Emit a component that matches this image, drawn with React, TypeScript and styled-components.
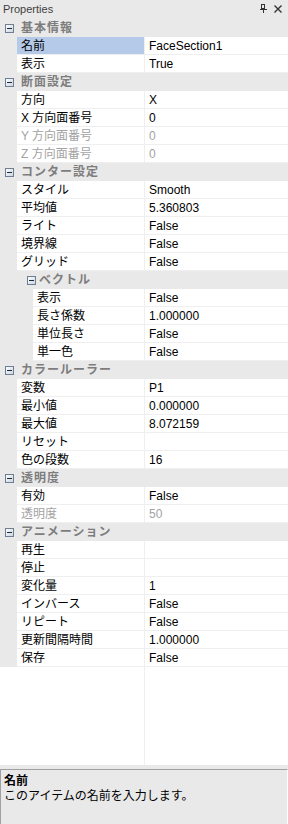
import React from "react";
import styled, { createGlobalStyle } from "styled-components";

const GlobalStyle = createGlobalStyle`
  html, body {
    margin: 0;
    padding: 0;
    background: #e9e9e9;
  }
  body {
    font-family: "Liberation Sans", "Noto Sans CJK JP", sans-serif;
    font-size: 12px;
    color: #000;
  }
`;

const SPLIT = 144;
const GRAY = "#e9e9e9";
const LINE = "#efefef";

const Panel = styled.div`
  width: 288px;
  height: 824px;
  display: flex;
  flex-direction: column;
  background: ${GRAY};
  overflow: hidden;
`;

const TitleBar = styled.div`
  height: 19px;
  display: flex;
  align-items: center;
  padding: 0 6px 0 3px;
  box-sizing: border-box;
  color: #3f3f3f;
  font-size: 11px;
`;

const Title = styled.span`
  flex: 1;
  padding-bottom: 2px;
`;

const TitleButtons = styled.div`
  display: flex;
  gap: 7px;
  align-items: center;
  padding-bottom: 2px;
`;

const Grid = styled.div`
  flex: 1;
  display: flex;
  flex-direction: column;
  background: linear-gradient(
    to right,
    #fff ${SPLIT}px,
    ${LINE} ${SPLIT}px,
    ${LINE} ${SPLIT + 1}px,
    #fff ${SPLIT + 1}px
  );
`;

const CategoryRow = styled.div<{ $indent: number }>`
  height: 18px;
  display: flex;
  align-items: center;
  background: ${GRAY};
  padding-left: ${p => p.$indent}px;
  box-sizing: border-box;
`;

const CategoryLabel = styled.span<{ $gap: number }>`
  margin-left: ${p => p.$gap}px;
  font-weight: bold;
  color: #7d7d7d;
  letter-spacing: 1px;
  line-height: 18px;
`;

const Row = styled.div<{ $gutter: number }>`
  height: 18px;
  display: grid;
  grid-template-columns: ${p => p.$gutter}px ${p => SPLIT + 1 - p.$gutter}px 1fr;
`;

const Gutter = styled.div`
  background: ${GRAY};
`;

const NameCell = styled.div<{ $selected?: boolean; $disabled?: boolean }>`
  background: ${p => (p.$selected ? "#b5c9e8" : "#fff")};
  color: ${p => (p.$disabled ? "#a3a3a3" : "#000")};
  border-right: 1px solid ${LINE};
  border-bottom: 1px solid ${LINE};
  padding: 1px 0 0 4px;
  line-height: 16px;
  white-space: nowrap;
  overflow: hidden;
`;

const ValueCell = styled.div<{ $disabled?: boolean }>`
  background: #fff;
  color: ${p => (p.$disabled ? "#a3a3a3" : "#000")};
  border-bottom: 1px solid ${LINE};
  padding: 1px 0 0 4px;
  line-height: 16px;
  white-space: nowrap;
`;

const Splitter = styled.div`
  height: 4px;
  background: ${GRAY};
`;

const Description = styled.div`
  height: 55px;
  box-sizing: border-box;
  background: ${GRAY};
  border-top: 1px solid #a0a0a0;
  border-left: 1px solid #a0a0a0;
  border-right: 1px solid #fff;
  padding: 4px 3px;
`;

const DescTitle = styled.div`
  font-weight: bold;
  line-height: 15px;
`;

const DescText = styled.div`
  line-height: 15px;
`;

const MinusBox = () => (
  <svg width="9" height="9" viewBox="0 0 9 9">
    <defs>
      <linearGradient id="mb" x1="0" y1="0" x2="1" y2="1">
        <stop offset="0" stopColor="#ffffff" />
        <stop offset="1" stopColor="#c9d3df" />
      </linearGradient>
    </defs>
    <rect x="0.5" y="0.5" width="8" height="8" fill="url(#mb)" stroke="#6f7f93" />
    <rect x="2" y="4" width="5" height="1" fill="#1d2a3a" />
  </svg>
);

const PinIcon = () => (
  <svg width="7" height="9" viewBox="0 0 7 9" shapeRendering="crispEdges">
    <rect x="1.5" y="0.5" width="3" height="4" fill="none" stroke="#333" />
    <rect x="4" y="1" width="1" height="4" fill="#333" />
    <rect x="0" y="5" width="7" height="1" fill="#333" />
    <rect x="3" y="6" width="1" height="3" fill="#333" />
  </svg>
);

const CloseIcon = () => (
  <svg width="8" height="8" viewBox="0 0 8 8">
    <path d="M0.5 0.5 L7.5 7.5 M7.5 0.5 L0.5 7.5" stroke="#333" strokeWidth="1.4" />
  </svg>
);

type Prop = { name: string; value: string; selected?: boolean; disabled?: boolean };
type Section = { title: string; nested?: boolean; props: Prop[] };

const sections: Section[] = [
  {
    title: "基本情報",
    props: [
      { name: "名前", value: "FaceSection1", selected: true },
      { name: "表示", value: "True" },
    ],
  },
  {
    title: "断面設定",
    props: [
      { name: "方向", value: "X" },
      { name: "X 方向面番号", value: "0" },
      { name: "Y 方向面番号", value: "0", disabled: true },
      { name: "Z 方向面番号", value: "0", disabled: true },
    ],
  },
  {
    title: "コンター設定",
    props: [
      { name: "スタイル", value: "Smooth" },
      { name: "平均値", value: "5.360803" },
      { name: "ライト", value: "False" },
      { name: "境界線", value: "False" },
      { name: "グリッド", value: "False" },
    ],
  },
  {
    title: "ベクトル",
    nested: true,
    props: [
      { name: "表示", value: "False" },
      { name: "長さ係数", value: "1.000000" },
      { name: "単位長さ", value: "False" },
      { name: "単一色", value: "False" },
    ],
  },
  {
    title: "カラールーラー",
    props: [
      { name: "変数", value: "P1" },
      { name: "最小値", value: "0.000000" },
      { name: "最大値", value: "8.072159" },
      { name: "リセット", value: "" },
      { name: "色の段数", value: "16" },
    ],
  },
  {
    title: "透明度",
    props: [
      { name: "有効", value: "False" },
      { name: "透明度", value: "50", disabled: true },
    ],
  },
  {
    title: "アニメーション",
    props: [
      { name: "再生", value: "" },
      { name: "停止", value: "" },
      { name: "変化量", value: "1" },
      { name: "インバース", value: "False" },
      { name: "リピート", value: "False" },
      { name: "更新間隔時間", value: "1.000000" },
      { name: "保存", value: "False" },
    ],
  },
];

export default function App() {
  return (
    <Panel>
      <GlobalStyle />
      <TitleBar>
        <Title>Properties</Title>
        <TitleButtons>
          <PinIcon />
          <CloseIcon />
        </TitleButtons>
      </TitleBar>
      <Grid>
        {sections.map(s => {
          const gutter = s.nested ? 33 : 17;
          return (
            <React.Fragment key={s.title}>
              <CategoryRow $indent={s.nested ? 27 : 5}>
                <MinusBox />
                <CategoryLabel $gap={s.nested ? 3 : 7}>{s.title}</CategoryLabel>
              </CategoryRow>
              {s.props.map(p => (
                <Row key={s.title + p.name} $gutter={gutter}>
                  <Gutter />
                  <NameCell $selected={p.selected} $disabled={p.disabled}>
                    {p.name}
                  </NameCell>
                  <ValueCell $disabled={p.disabled}>{p.value}</ValueCell>
                </Row>
              ))}
            </React.Fragment>
          );
        })}
      </Grid>
      <Splitter />
      <Description>
        <DescTitle>名前</DescTitle>
        <DescText>このアイテムの名前を入力します。</DescText>
      </Description>
    </Panel>
  );
}
